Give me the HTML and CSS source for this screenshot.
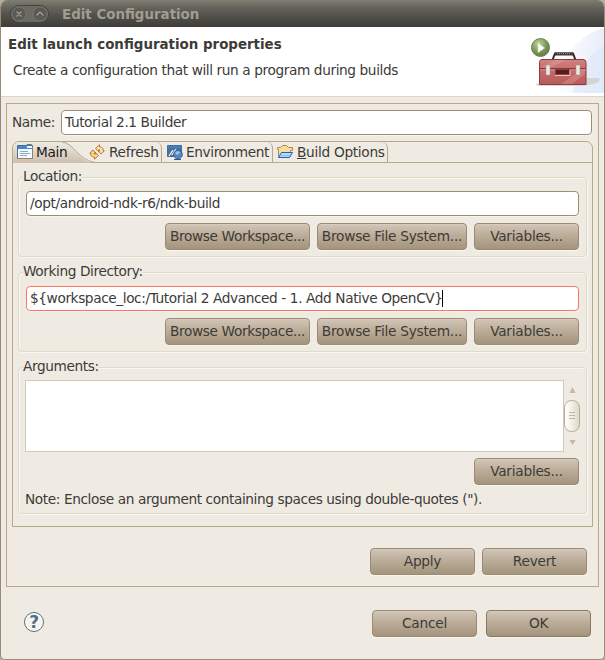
FILE: index.html
```html
<!DOCTYPE html>
<html lang="en">
<head>
<meta charset="utf-8">
<title>Edit Configuration</title>
<link rel="stylesheet" href="styles.css">
</head>
<body>
<div class="window">
  <div class="titlebar">
    <div class="controls">
      <svg width="39" height="18" viewBox="0 0 39 18">
        <rect x=".5" y=".5" width="38" height="17" rx="8.5" fill="#6c6a64" stroke="#45433e"/>
        <circle cx="9" cy="9" r="7" fill="#5b5953" stroke="#77756f"/>
        <circle cx="30" cy="9" r="7" fill="#5b5953" stroke="#77756f"/>
        <path d="M6.500 6.500l5 5m0-5l-5 5M26.500 10.500l3.500-3.500 3.500 3.500" fill="none" stroke="#a5a298" stroke-width="1.1"/>
      </svg>
    </div>
    <div class="title">Edit Configuration</div>
  </div>
  <div class="header">
    <div class="heading">
      <div class="h1">Edit launch configuration properties</div>
      <div class="sub">Create a configuration that will run a program during builds</div>
    </div>
    <svg class="banner" width="74" height="69" viewBox="0 0 74 69">
      <defs>
        <linearGradient id="sky" x1="0" x2="1" y1="0" y2="0"><stop offset="0" stop-color="#fff"/><stop offset="1" stop-color="#e3e9f7"/></linearGradient>
        <linearGradient id="red" x1="0" x2="0" y1="0" y2="1"><stop offset="0" stop-color="#cf8581"/><stop offset=".4" stop-color="#c46d6c"/><stop offset="1" stop-color="#b95a5a"/></linearGradient>
        <radialGradient id="grn" cx=".4" cy=".3" r=".75"><stop offset="0" stop-color="#c0d2a0"/><stop offset=".55" stop-color="#809a5c"/><stop offset="1" stop-color="#5c7b40"/></radialGradient>
      </defs>
      <path d="M74 1C52 7 33 24 23 66H74z" fill="url(#sky)" opacity=".8"/>
      <path d="M74 19C60 25 48 43 43 66H74z" fill="#dae4f8" opacity=".5"/>
      <path d="M56 51h12q4 1-1 5l-12 3H8l-3-2z" fill="#cfccc9" opacity=".75"/>
      <path d="M22.500 33l2.500-6.500h18l2.500 6.500" fill="none" stroke="#3b2529" stroke-width="2"/>
      <path d="M25 27h18" stroke="#45363a" stroke-width="3"/>
      <path d="M27 26.500h14" stroke="#998a8c" stroke-dasharray="1 1"/>
      <path d="M12 32.500h41q3 0 3 3v22H9.500v-22q0-3 2.500-3z" fill="url(#red)" stroke="#8c3c40"/>
      <path d="M10 40L26 33h10L20 41zM31 57l24-17v7L42 57z" fill="#e4aaa4" opacity=".35"/>
      <path d="M10 41.500h46" stroke="#8f353b"/><path d="M10 43h46" stroke="#df9893" opacity=".6"/>
      <rect x="25.500" y="42.500" width="14" height="5" fill="#571c20" stroke="#963f41"/>
      <path d="M25 48.500h15V43" fill="none" stroke="#f0c5b8"/>
      <path d="M16 38h4v10h-4zM46 38h4v10h-4z" fill="#ecebe3" stroke="#a7898a" stroke-width=".6"/>
      <circle cx="10.500" cy="20.500" r="9" fill="url(#grn)" stroke="#6a8450"/>
      <path d="M8 16v9.500l6.500-4.500z" fill="#fff" stroke="#d5dfc5" stroke-width=".7"/>
    </svg>
  </div>
  <div class="panel">
    <div class="name-row"><label>Name:</label><div class="input">Tutorial 2.1 Builder</div></div>
    <div class="folder">
      <div class="tabs">
        <div class="tab main">
          <svg class="shape" width="84" height="21" viewBox="0 0 84 21">
            <defs><linearGradient id="tabg" x1="0" x2="0" y1="0" y2="1"><stop offset="0" stop-color="#efebe3"/><stop offset="1" stop-color="#cdbfaf"/></linearGradient></defs>
            <path d="M0 21V5Q2 0 7 0H49C61 1 65 19 81 21z" fill="url(#tabg)"/>
            <path d="M49 0C61 1 65 18 82 20.500" fill="none" stroke="#b8a888"/>
          </svg>
          <svg class="icon" width="16" height="16" viewBox="0 0 16 16">
            <path d="M10 .500h4.500v3H10z" fill="#f8fcff" stroke="#4b80b1"/>
            <path d="M.500 1.500h15v13H.500z" fill="#f6faff" stroke="#426f9c"/><path d="M1 2h9v2h5v1H1z" fill="#4388c9"/>
            <path d="M.500 14.500h15v-12" fill="none" stroke="#938263"/>
            <path d="M3 7.500h8M3 9.500h10M3 11.500h7" stroke="#8ba8c5"/>
          </svg><span>Main</span>
        </div>
        <div class="tab refresh">
          <svg class="icon" width="16" height="16" viewBox="0 0 16 16">
            <path d="M6.500 4.500L10.500.8v2c3.500.5 4 2 3.500 4h1.300L12 10 9 6.800h1.700c0-1-.2-1.200-.7-1.200v2z" fill="#fce5a2" stroke="#b96a32" stroke-width=".9"/>
            <path d="M9.500 11.500L5.500 15.200v-2C2 12.700 1.500 11.200 2 9.200H.7L4 6l3 3.200H5.300c0 1 .2 1.200.7 1.200v-2z" fill="#fad588" stroke="#b96a32" stroke-width=".9"/>
          </svg><span>Refresh</span>
        </div>
        <div class="tab environment">
          <svg class="icon" width="16" height="16" viewBox="0 0 16 16">
            <path d="M.5 1.500h14v11H.5z" fill="#526d90" stroke="#3d6da5"/><path d="M1 2h13v2H1z" fill="#3f81c2"/>
            <path d="M2 12l4-6M5 11l4-6" stroke="#f3f5f6" stroke-width="1.300"/>
            <circle cx="11" cy="10.500" r="4.300" fill="#5089c5" stroke="#335f99"/><path d="M8 9q4-4 5 0l-3 2zM11 13l3-2" fill="#9cc6df"/><path d="M7 15.500h7" stroke="#315984"/>
          </svg><span>Environment</span>
        </div>
        <div class="tab build">
          <svg class="icon" width="16" height="16" viewBox="0 0 16 16">
            <path d="M1.500 12.500v-7h-1v-2h3l2-2h4l2 2h4v3h-2v6z" fill="#f8de9b" stroke="#a68b57"/>
            <path d="M1.500 13.500l3-5h11l-3 5z" fill="#b0dcfb" stroke="#285fae"/><path d="M4 11.500h9" stroke="#80c1f5"/>
          </svg><span><u>B</u>uild Options</span>
        </div>
      </div>
      <div class="page">
        <div class="group">
          <div class="legend">Location:</div>
          <div class="input">/opt/android-ndk-r6/ndk-build</div>
          <div class="buttons"><div class="btn w145">Browse Workspace...</div><div class="btn w150">Browse File System...</div><div class="btn">Variables...</div></div>
        </div>
        <div class="group">
          <div class="legend">Working Directory:</div>
          <div class="input error">${workspace_loc:/Tutorial 2 Advanced - 1. Add Native OpenCV}<span class="caret"></span></div>
          <div class="buttons"><div class="btn w145">Browse Workspace...</div><div class="btn w150">Browse File System...</div><div class="btn">Variables...</div></div>
        </div>
        <div class="group args">
          <div class="legend">Arguments:</div>
          <div class="area-row">
            <div class="area"></div>
            <svg width="16" height="72" viewBox="0 0 16 72">
              <defs><linearGradient id="thumb" x1="0" x2="1" y1="0" y2="0"><stop offset="0" stop-color="#fff"/><stop offset=".4" stop-color="#f5f2ec"/><stop offset="1" stop-color="#ddd5c8"/></linearGradient></defs>
              <path d="M8.500 7l3 6h-6zM8.500 65l3-5h-6z" fill="#c5b9a5"/>
              <rect x=".500" y="20.500" width="15" height="31" rx="7" fill="url(#thumb)" stroke="#b8a98f"/>
              <path d="M5 32.500h6M5 35.500h6M5 38.500h6" stroke="#c2b7a5"/>
            </svg>
          </div>
          <div class="buttons"><div class="btn">Variables...</div></div>
          <div class="note">Note: Enclose an argument containing spaces using double-quotes (").</div>
        </div>
      </div>
    </div>
    <div class="apply-row"><div class="btn">Apply</div><div class="btn">Revert</div></div>
  </div>
  <div class="footer">
    <div class="help">?</div>
    <div class="btn">Cancel</div><div class="btn ok">OK</div>
  </div>
</div>
</body>
</html>
```
FILE: styles.css
```css
* { box-sizing: border-box; }
body {
  margin: 0;
  width: 605px;
  height: 660px;
  overflow: hidden;
  background: #b9ae9c;
  color: #3c3b37;
  font: 13.7px/16px "DejaVu Sans", sans-serif;
  letter-spacing: -0.4px;
  white-space: nowrap;
}
svg { display: block; flex: none; }
.window {
  width: 605px;
  height: 660px;
  border: solid #988a78;
  border-width: 0 1px 1px;
  border-radius: 7px 7px 5px 5px;
  background: #efebe3;
  overflow: hidden;
}
.titlebar {
  height: 27px;
  display: flex;
  align-items: center;
  padding: 1px 0 0 9px;
  background: linear-gradient(#807d73 0, #68665e 25%, #53524c 55%, #3e3d39);
}
.title {
  margin-left: 13px;
  padding-top: 1px;
  color: #a09d91;
  font-weight: bold;
  font-size: 13.4px;
  letter-spacing: 0;
}
.header {
  height: 70px;
  display: flex;
  justify-content: space-between;
  background: #fff;
  border-bottom: 1px solid #ded5c8;
}
.heading { padding: 10px 0 0 7px; }
.h1 { font-weight: bold; font-size: 13.4px; letter-spacing: 0; }
.sub { margin: 9px 0 0 5px; }
.panel {
  width: 593px;
  height: 484px;
  margin: 6px 0 0 5px;
  border: 1px solid #b8a888;
  padding: 6px 6px 0 5px;
}
.name-row { display: flex; height: 25px; align-items: center; }
.name-row label { width: 49px; margin-top: -1px; }
.input {
  flex: 1;
  height: 25px;
  padding: 3px;
  line-height: 16px;
  background: #fff;
  border: 1px solid #9f8e71;
  border-radius: 4px;
  box-shadow: 0 1px 0 #f7f4ee;
}
.folder {
  height: 386px;
  margin-top: 6px;
  margin-right: -1px;
  border: 1px solid #b8a888;
  border-radius: 7px 7px 0 0;
}
.tabs { height: 21px; display: flex; border-bottom: 1px solid #b8a888; }
.tab {
  display: flex;
  position: relative;
  height: 20px;
  line-height: 22px;
  align-items: center;
  border-right: 1px solid #b8a888;
  border-top-right-radius: 6px;
}
.tab span { position: relative; margin-left: 3px; letter-spacing: -0.3px; }
.tab .icon { position: relative; }
.tab.main { width: 73px; padding-left: 4px; border: 0; color: #1a1a1a; }
.shape { position: absolute; left: 0; top: 0; }
.tab.refresh { width: 76px; padding-left: 3px; }
.tab.refresh span { margin-left: 4px; }
.tab.environment { width: 111px; padding-left: 5px; }
.tab.environment span { letter-spacing: -0.4px; }
.tab.build { width: 115px; padding-left: 4px; }
.tab.build span { margin-left: 4px; }
.page { padding: 14px 5px 0; }
.group {
  width: 569px;
  height: 80px;
  margin-bottom: 15px;
  padding: 0 7px;
  border: 1px solid #e0daca;
  border-radius: 4px;
  box-shadow: 1px 1px 0 #faf7f0, inset 1px 1px 0 #faf7f0;
}
.legend {
  width: max-content;
  height: 16px;
  margin: -10px 0 7px -3px;
  line-height: 17px;
  background: #efebe3;
  position: relative;
}
.input.error { border-color: #f9765f; display: flex; }
.caret { width: 1px; height: 17px; margin-left: -1px; background: #000; }
.buttons { display: flex; justify-content: flex-end; gap: 7px; margin-top: 7px; }
.btn {
  width: 105px;
  height: 27px;
  line-height: 25px;
  letter-spacing: -0.25px;
  text-align: center;
  border: 1px solid #9a8b77;
  border-radius: 4px;
  background: linear-gradient(#d2c6b7, #bcad99 45%, #a4947d);
  box-shadow: inset 0 1px 0 #d6cbbd, 0 1px 0 #f8f5ef;
}
.w145 { width: 145px; letter-spacing: -0.38px; }
.w150 { width: 150px; }
.args { height: 147px; margin: 0; }
.args .legend { margin-bottom: 6px; }
.area-row { display: flex; justify-content: space-between; margin: 0 -1px; }
.area { width: 539px; height: 72px; background: #fff; border: 1px solid #d3cab7; }
.args .buttons { margin-top: 6px; }
.note { margin: 6px 0 0 -1px; }
.apply-row { display: flex; justify-content: flex-end; gap: 7px; margin: 21px 5px 0 0; }
.footer { display: flex; align-items: center; margin-top: 23px; padding: 0 13px 0 23px; }
.help {
  width: 20px;
  height: 20px;
  margin: 0 auto 3px 0;
  border: 1px solid #53717d;
  border-radius: 50%;
  background: #f5f4ef;
  box-shadow: inset 0 0 0 1px #fff;
  color: #576d80;
  font-weight: bold;
  font-size: 17px;
  line-height: 18px;
  text-align: center;
}
.ok { margin-left: 9px; border-color: #877862; }
```
